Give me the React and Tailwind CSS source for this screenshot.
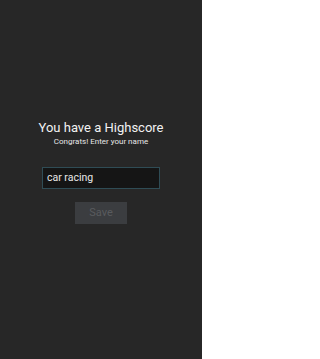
import React from "react";

export default function App() {
  return (
    <div
      className="w-[202px] h-[359px] bg-[#272727] flex flex-col items-center pt-[120px]"
      style={{ fontFamily: "Roboto, 'Noto Sans', sans-serif" }}
    >
      <p className="text-[13px] leading-[16px] text-[#f2f2f2]">You have a Highscore</p>
      <p className="text-[8px] leading-[10px] text-[#e6e6e6] mt-[1px]">Congrats! Enter your name</p>
      <div className="mt-[20px] w-[118px] h-[22px] border-[1.5px] border-[#2f4c55] bg-[#151515] flex items-center px-[4px]">
        <span className="text-[10.5px] text-[#e8e8e8]">car racing</span>
      </div>
      <div className="mt-[13px] w-[52px] h-[22px] bg-[#3b3d40] flex items-center justify-center">
        <span className="text-[11px] text-[#595b5e]">Save</span>
      </div>
    </div>
  );
}
